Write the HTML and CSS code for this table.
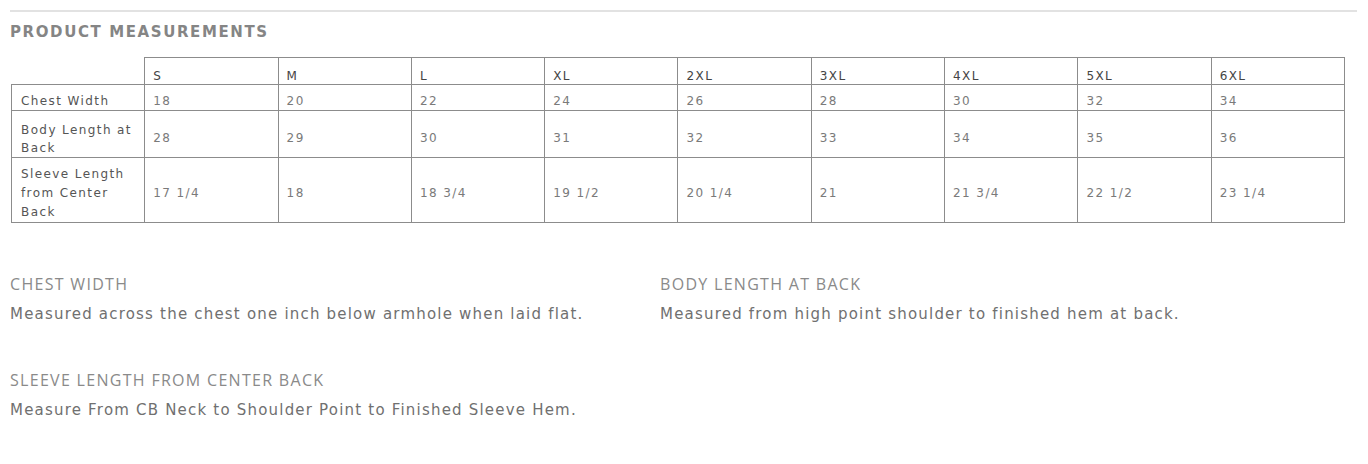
FILE: index.html
```html
<!DOCTYPE html>
<html>
<head>
<meta charset="utf-8">
<link rel="stylesheet" href="styles.css">
</head>
<body>
<div class="page">
  <div class="rule"></div>
  <h2 class="title">PRODUCT MEASUREMENTS</h2>
  <table class="sizes">
    <colgroup>
      <col><col><col><col><col><col><col><col><col><col>
    </colgroup>
    <tr class="head">
      <td class="blank"></td><td>S</td><td>M</td><td>L</td><td>XL</td><td>2XL</td><td>3XL</td><td>4XL</td><td>5XL</td><td>6XL</td>
    </tr>
    <tr class="r-chest">
      <th>Chest Width</th><td>18</td><td>20</td><td>22</td><td>24</td><td>26</td><td>28</td><td>30</td><td>32</td><td>34</td>
    </tr>
    <tr class="r-body">
      <th>Body Length at Back</th><td>28</td><td>29</td><td>30</td><td>31</td><td>32</td><td>33</td><td>34</td><td>35</td><td>36</td>
    </tr>
    <tr class="r-sleeve">
      <th>Sleeve Length from Center Back</th><td>17 1/4</td><td>18</td><td>18 3/4</td><td>19 1/2</td><td>20 1/4</td><td>21</td><td>21 3/4</td><td>22 1/2</td><td>23 1/4</td>
    </tr>
  </table>
  <div class="notes">
    <div class="note">
      <h3>CHEST WIDTH</h3>
      <p>Measured across the chest one inch below armhole when laid flat.</p>
    </div>
    <div class="note">
      <h3>BODY LENGTH AT BACK</h3>
      <p>Measured from high point shoulder to finished hem at back.</p>
    </div>
    <div class="note">
      <h3>SLEEVE LENGTH FROM CENTER BACK</h3>
      <p>Measure From CB Neck to Shoulder Point to Finished Sleeve Hem.</p>
    </div>
  </div>
</div>
</body>
</html>
```

FILE: styles.css
```css
html, body {
  margin: 0;
  padding: 0;
  background: #fff;
}
.page {
  padding: 10px 11px 0 10px;
  font-family: "DejaVu Sans", Verdana, sans-serif;
}
.rule {
  height: 2px;
  background: #e2e2e2;
}
.title {
  margin: 12px 0 0 0;
  font-size: 15px;
  font-weight: bold;
  letter-spacing: 1.6px;
  color: #858585;
  line-height: 16px;
}
.sizes {
  margin: 17px 0 0 1px;
  width: 1334px;
  border-collapse: collapse;
  table-layout: fixed;
  font-size: 12px;
  line-height: 15px;
  letter-spacing: 1.4px;
}
.sizes td, .sizes th {
  border: 1px solid #8c8c8c;
  text-align: left;
  vertical-align: middle;
  font-weight: normal;
}
.sizes td {
  color: #7a7a7a;
  padding: 0 8px;
}
.sizes th {
  color: #555;
  line-height: 19px;
  padding: 0 9px;
}
.sizes .head td {
  color: #444;
  height: 16px;
  padding-top: 10px;
}
.sizes td.blank {
  border-top: none;
  border-left: none;
}
.r-chest th, .r-chest td {
  height: 17px;
  padding-top: 8px;
}
.sizes .r-chest th {
  line-height: 15px;
}
.r-body th, .r-body td {
  height: 37px;
  padding-top: 9px;
}
.sizes .r-body th {
  line-height: 18px;
}
.r-sleeve th, .r-sleeve td {
  height: 57px;
  padding-top: 7px;
}
.notes {
  display: grid;
  grid-template-columns: 650px 1fr;
  row-gap: 46px;
  margin-top: 51px;
}
.note h3 {
  margin: 0;
  font-family: "Open Sans", "DejaVu Sans", sans-serif;
  font-weight: normal;
  font-size: 16px;
  letter-spacing: 1.3px;
  color: #8a8a8a;
  line-height: 20px;
}
.note p {
  margin: 10px 0 0 0;
  font-size: 15px;
  letter-spacing: 1.2px;
  color: #707070;
  line-height: 20px;
}
```
